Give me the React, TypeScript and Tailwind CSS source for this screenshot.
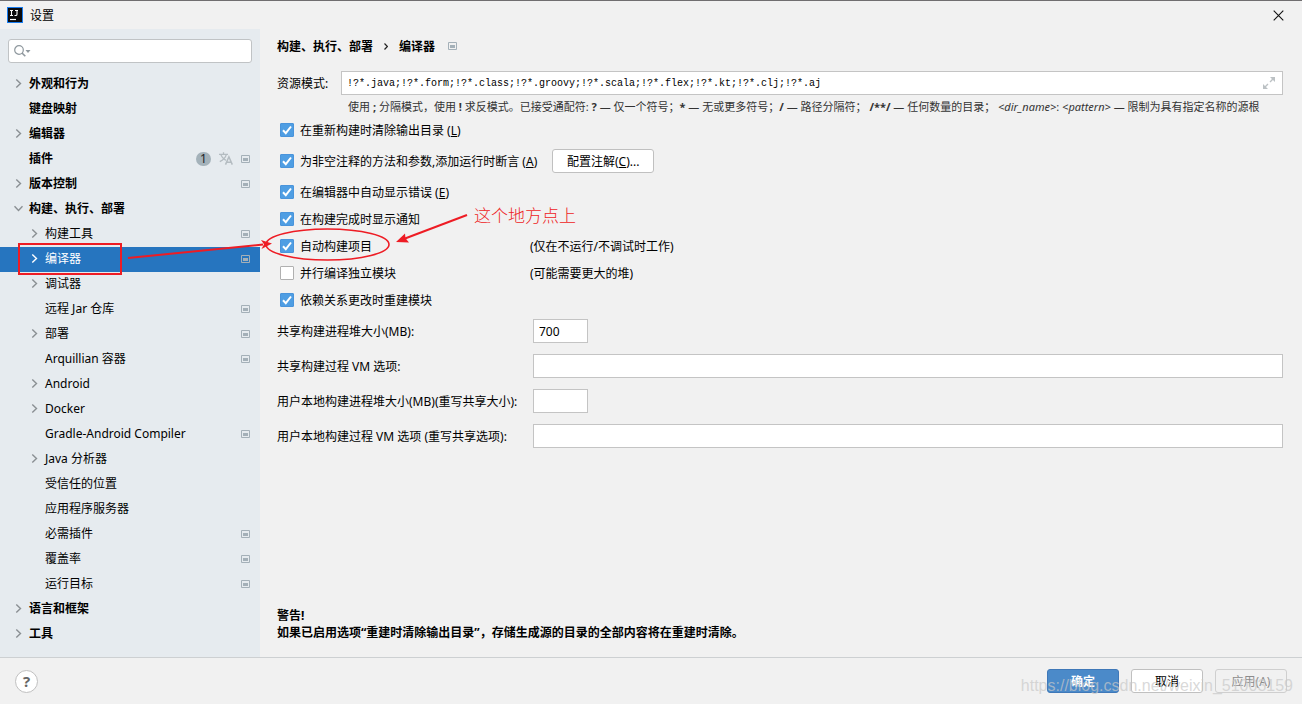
import React, { useState } from 'react';
import { clsx } from 'clsx';

type TreeNode = {
  label: string;
  child?: boolean;
  arrow?: 'right' | 'down';
  project?: boolean;
  plugins?: boolean;
};

const TREE: TreeNode[] = [
  { label: '外观和行为', arrow: 'right' },
  { label: '键盘映射' },
  { label: '编辑器', arrow: 'right' },
  { label: '插件', project: true, plugins: true },
  { label: '版本控制', arrow: 'right', project: true },
  { label: '构建、执行、部署', arrow: 'down' },
  { label: '构建工具', child: true, arrow: 'right', project: true },
  { label: '编译器', child: true, arrow: 'right', project: true },
  { label: '调试器', child: true, arrow: 'right' },
  { label: '远程 Jar 仓库', child: true, project: true },
  { label: '部署', child: true, arrow: 'right', project: true },
  { label: 'Arquillian 容器', child: true, project: true },
  { label: 'Android', child: true, arrow: 'right' },
  { label: 'Docker', child: true, arrow: 'right' },
  { label: 'Gradle-Android Compiler', child: true, project: true },
  { label: 'Java 分析器', child: true, arrow: 'right' },
  { label: '受信任的位置', child: true },
  { label: '应用程序服务器', child: true },
  { label: '必需插件', child: true, project: true },
  { label: '覆盖率', child: true, project: true },
  { label: '运行目标', child: true, project: true },
  { label: '语言和框架', arrow: 'right' },
  { label: '工具', arrow: 'right' },
];

const ProjectIcon = () => (
  <svg className="w-[9px] h-2 shrink-0" viewBox="0 0 9 8" fill="none" aria-hidden="true">
    <path d="M0.5 0.5h8v7h-8z" stroke="#a4b0b8" />
    <path d="M2 3h5v3H2z" fill="#a4b0b8" />
  </svg>
);

const Chevron = ({ dir, selected }: { dir: 'right' | 'down'; selected: boolean }) => (
  <svg
    className="size-[9px]"
    viewBox="0 0 9 9"
    fill="none"
    stroke={selected ? '#ffffff' : '#8a8f93'}
    strokeWidth="1.4"
    aria-hidden="true"
  >
    {dir === 'right' ? <path d="M2.3 0.5L6.5 4.5L2.3 8.5" /> : <path d="M0.5 2.3L4.5 6.5L8.5 2.3" />}
  </svg>
);

const TranslateIcon = () => (
  <svg className="w-[14px] h-[13px]" viewBox="0 0 14 13" fill="none" stroke="#b4bcc1" strokeWidth="1.3" aria-hidden="true">
    <path d="M0 2.3h9 M4.5 0.3v2 M7.3 2.6C6.5 5.5 4 8 0.8 9.6 M1.8 2.6C2.6 5 4.5 7 6.8 8.4" />
    <path d="M6.5 12.6L9.9 4.8L13.3 12.6 M7.7 10.2h4.4" strokeWidth="1.5" />
  </svg>
);

const TreeRow = ({ node, selected, onSelect }: { node: TreeNode; selected: boolean; onSelect: () => void }) => (
  <li>
    <button
      type="button"
      onClick={onSelect}
      className={clsx(
        'w-full h-[25px] pr-[10px] pb-[2px] flex items-center text-left',
        node.child ? 'pl-[30px]' : 'pl-[14px] font-bold',
        selected ? 'bg-[#2675bf] text-white' : 'text-black'
      )}
    >
      <span className="w-[15px] shrink-0">
        {node.arrow && <Chevron dir={node.arrow} selected={selected} />}
      </span>
      <span className="flex-1">{node.label}</span>
      <span className="flex items-center gap-2">
        {node.plugins && (
          <>
            <span className="w-[15px] h-[14px] rounded-full bg-[#a4b2ba] text-[#1d2225] font-normal leading-[14px] text-center">1</span>
            <TranslateIcon />
          </>
        )}
        {node.project && <ProjectIcon />}
      </span>
    </button>
  </li>
);

const CheckItem = ({
  children,
  checked = true,
  note,
}: {
  children: React.ReactNode;
  checked?: boolean;
  note?: string;
}) => (
  <div className="h-6 flex items-center">
    <label className={clsx('pl-[3px] flex items-center gap-[6px]', note && 'w-[253px]')}>
      <span className="grid">
        <input
          type="checkbox"
          defaultChecked={checked}
          className="peer col-start-1 row-start-1 appearance-none size-[14px] rounded-[1px] border border-[#b0b0b0] bg-white checked:border-[#4a94db] checked:bg-[#4f9ee3]"
        />
        <svg
          className="col-start-1 row-start-1 size-[14px] pointer-events-none opacity-0 peer-checked:opacity-100"
          viewBox="0 0 14 14"
          fill="none"
          stroke="white"
          strokeWidth="2"
        >
          <path d="M3 7.3L5.8 10.2L11 3.5" />
        </svg>
      </span>
      <span>{children}</span>
    </label>
    {note && <span>{note}</span>}
  </div>
);

const FIELDS = [
  { id: 'shared-heap', label: '共享构建进程堆大小(MB):', value: '700', short: true },
  { id: 'shared-vm', label: '共享构建过程 VM 选项:', value: '' },
  { id: 'local-heap', label: '用户本地构建进程堆大小(MB)(重写共享大小):', value: '', short: true },
  { id: 'local-vm', label: '用户本地构建过程 VM 选项 (重写共享选项):', value: '' },
];

const Annotations = () => (
  <div className="absolute inset-0 pointer-events-none">
    <svg className="absolute left-0 top-0 w-[600px] h-[300px]" viewBox="0 0 600 300" fill="none" stroke="#ee1c24" strokeWidth="2">
      <rect x="19" y="243" width="102" height="30" />
      <path d="M128 257L263 243.5" />
      <path d="M272 242.5L261 239L264 243.3L261.5 248z" fill="#ee1c24" stroke="none" />
      <ellipse cx="327.5" cy="243.5" rx="61.5" ry="15.5" strokeWidth="1.6" />
      <path d="M467 214L405 237.5" />
      <path d="M396 241L405 232.5L405.5 237.3L409 241.5z" fill="#ee1c24" stroke="none" />
    </svg>
    <span className="absolute left-[474px] top-[204px] text-[17px] leading-[22px] font-light text-[#ee1c24]">这个地方点上</span>
    <span className="absolute right-[9px] bottom-[7px] font-['Liberation_Sans'] text-[16px] leading-[22px] text-[#c8c8c8]/70">
      https://blog.csdn.net/weixin_51003159
    </span>
  </div>
);

const App = () => {
  const [selected, setSelected] = useState('编译器');

  return (
    <div className="relative min-h-screen flex flex-col bg-[#f1f1f1] border-t border-[#706e70] text-black text-[12px] leading-[17px] font-['Noto_Sans','Noto_Sans_CJK_SC',sans-serif]">
      {/* Title bar */}
      <header className="h-7 pl-[7px] pr-[18px] flex items-center">
        <svg className="size-4" viewBox="0 0 16 16" aria-hidden="true">
          <rect x="0.5" y="0.5" width="15" height="15" fill="#0b0b0d" stroke="#1a7df0" />
          <path d="M3 3.5h3M4.5 3.5v5M3 8.5h3M8 3.5h3M10 3.5v3.7Q10 8.5 8.7 8.5H7.5" stroke="#fff" strokeWidth="1.1" fill="none" />
          <path d="M3 12.5h6" stroke="#fff" strokeWidth="1.2" />
        </svg>
        <h1 className="ml-[7px] flex-1">设置</h1>
        <button type="button" aria-label="关闭" className="size-[11px]">
          <svg viewBox="0 0 11 11" fill="none" stroke="#111" strokeWidth="1.1">
            <path d="M0.7 0.7L10.3 10.3M10.3 0.7L0.7 10.3" />
          </svg>
        </button>
      </header>

      <div className="flex-1 flex">
        {/* Settings tree */}
        <aside className="w-[260px] shrink-0 pt-[10px] pb-[9px] bg-[#e6ebef]">
          <label className="mx-2 mb-[9px] h-6 pl-[5px] flex items-center rounded-[3px] border border-[#c0c3c5] bg-white">
            <svg className="w-[17px] h-3 shrink-0" viewBox="0 0 17 12" fill="none" aria-hidden="true">
              <circle cx="5" cy="5" r="4.3" stroke="#8f989e" strokeWidth="1.2" />
              <path d="M8 8L11.3 11.3" stroke="#8f989e" strokeWidth="1.6" />
              <path d="M11.5 5h5L14 8z" fill="#8f989e" />
            </svg>
            <input type="search" aria-label="搜索" className="flex-1 min-w-0 bg-transparent outline-none" />
          </label>
          <ul>
            {TREE.map((node) => (
              <TreeRow
                key={node.label}
                node={node}
                selected={node.label === selected}
                onSelect={() => setSelected(node.label)}
              />
            ))}
          </ul>
        </aside>

        {/* Compiler page */}
        <main className="flex-1 min-w-0 pl-[17px] pr-[19px] pb-4 flex flex-col">
          <div className="h-[34px] mb-2 flex items-center font-bold">
            <span>构建、执行、部署</span>
            <svg className="mx-[11px] w-1 h-[7px]" viewBox="0 0 4 7" fill="none" stroke="#222" strokeWidth="1.2">
              <path d="M0.5 0.5L3.4 3.5L0.5 6.5" />
            </svg>
            <span className="mr-[13px]">编译器</span>
            <ProjectIcon />
          </div>

          <div className="flex items-center">
            <label htmlFor="patterns" className="w-16 shrink-0">资源模式:</label>
            <div className="flex-1 h-6 pl-[5px] pr-[7px] flex items-center border border-[#c4c4c4] bg-white">
              <input
                id="patterns"
                className="flex-1 min-w-0 outline-none font-['Liberation_Mono',monospace] text-[10px]"
                defaultValue="!?*.java;!?*.form;!?*.class;!?*.groovy;!?*.scala;!?*.flex;!?*.kt;!?*.clj;!?*.aj"
              />
              <svg className="size-3" viewBox="0 0 12 12" aria-hidden="true">
                <path d="M7 0h5v5zM0 7v5h5z" fill="#bcc1c4" />
                <path d="M7 5L10.5 1.5M5 7L1.5 10.5" stroke="#bcc1c4" strokeWidth="1.4" />
              </svg>
            </div>
          </div>
          <p className="h-[23px] pl-[71px] text-[11px] leading-[23px] text-[#333] whitespace-nowrap">
            使用 <b>;</b> 分隔模式，使用 <b>!</b> 求反模式。已接受通配符: <b>?</b> — 仅一个符号；<b>*</b> — 无或更多符号；<b>/</b> — 路径分隔符； <b>/**/</b> — 任何数量的目录； <i>&lt;dir_name&gt;</i>: <i>&lt;pattern&gt;</i> — 限制为具有指定名称的源根
          </p>

          <div className="flex flex-col gap-[7px]">
            <CheckItem>在重新构建时清除输出目录 (<u>L</u>)</CheckItem>
            <div className="flex items-center gap-[15px]">
              <CheckItem>为非空注释的方法和参数,添加运行时断言 (<u>A</u>)</CheckItem>
              <button type="button" className="h-6 w-[102px] rounded-[3px] border border-[#c0c0c0] bg-white">
                配置注解(<u>C</u>)...
              </button>
            </div>
            <CheckItem>在编辑器中自动显示错误 (<u>E</u>)</CheckItem>
          </div>
          <div className="mt-[3px] flex flex-col gap-[3px]">
            <CheckItem>在构建完成时显示通知</CheckItem>
            <CheckItem note="(仅在不运行/不调试时工作)">自动构建项目</CheckItem>
            <CheckItem note="(可能需要更大的堆)" checked={false}>并行编译独立模块</CheckItem>
            <CheckItem>依赖关系更改时重建模块</CheckItem>
          </div>

          <div className="mt-[7px] flex flex-col gap-[11px]">
            {FIELDS.map((field) => (
              <div key={field.id} className="flex items-center">
                <label htmlFor={field.id} className="w-64 shrink-0">{field.label}</label>
                <input
                  id={field.id}
                  defaultValue={field.value}
                  className={clsx('h-6 px-[5px] border border-[#c4c4c4] bg-white outline-none', field.short ? 'w-[55px]' : 'flex-1 min-w-0')}
                />
              </div>
            ))}
          </div>

          <div className="mt-auto font-bold">
            <p>警告!</p>
            <p>如果已启用选项“重建时清除输出目录”，存储生成源的目录的全部内容将在重建时清除。</p>
          </div>
        </main>
      </div>

      <footer className="h-[47px] pl-[15px] pr-[15px] flex items-center gap-3 border-t border-[#cdd0d2]">
        <button type="button" aria-label="帮助" className="mr-auto size-[23px] rounded-full border border-[#c0c0c0] bg-white text-[15px] font-bold text-[#666]">
          ?
        </button>
        <button type="button" className="w-[72px] h-6 rounded-[3px] border border-[#3f78b8] bg-[#4b8ac9] font-bold text-white">确定</button>
        <button type="button" className="w-[72px] h-6 rounded-[3px] border border-[#c0c0c0] bg-white">取消</button>
        <button type="button" disabled className="w-[72px] h-6 rounded-[3px] border border-[#cfcfcf] text-[#8c8c8c]">应用(A)</button>
      </footer>

      <Annotations />
    </div>
  );
};

export default App;
